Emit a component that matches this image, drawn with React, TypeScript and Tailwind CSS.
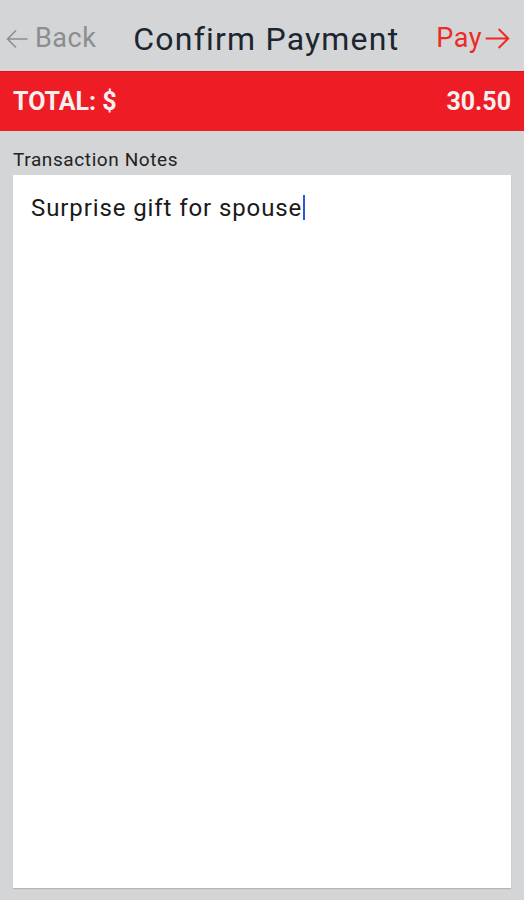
const notes = 'Surprise gift for spouse';

function ArrowLeft({ className }: { className?: string }) {
  return (
    <svg viewBox="0 0 24 24" className={className} fill="none" stroke="currentColor" strokeWidth={1.6}>
      <path d="M22.5 12H2.5M11 3.5 2.5 12l8.5 8.5" />
    </svg>
  );
}

function ArrowRight({ className }: { className?: string }) {
  return (
    <svg viewBox="0 0 24 24" className={className} fill="none" stroke="currentColor" strokeWidth={1.8}>
      <path d="M1.5 12h20M13 3.5l8.5 8.5-8.5 8.5" />
    </svg>
  );
}

export default function App() {
  return (
    <div className="flex h-[900px] w-[524px] flex-col bg-[#d3d5d6] font-['Roboto',sans-serif]">
      <header className="flex h-[71px] items-center px-[5px] pt-[6px]">
        <button className="flex items-center gap-[6px] text-[27px] tracking-[0.5px] text-[#8c8d8e]">
          <ArrowLeft className="h-[24px] w-[24px]" />
          <span>Back</span>
        </button>
        <h1 className="ml-[37px] text-[32px] tracking-[1.2px] text-[#1c2530]">Confirm Payment</h1>
        <button className="ml-auto flex items-center gap-[2px] pr-[8px] text-[27px] tracking-[0.5px] text-[#ee2a26]">
          <span>Pay</span>
          <ArrowRight className="h-[27px] w-[27px]" />
        </button>
      </header>

      <div className="flex h-[60px] items-center justify-between border-t border-[#d8141c] bg-[#ee1c25] px-[13px] text-[25px] font-bold text-[#f4f0f0]">
        <span>TOTAL: $</span>
        <span>30.50</span>
      </div>

      <div className="flex flex-1 flex-col px-[13px] pb-[12px]">
        <label className="pt-[17px] pb-[3px] text-[19px] leading-[24px] tracking-[0.6px] text-[#222]">
          Transaction Notes
        </label>
        <div className="flex-1 bg-white px-[18px] pt-[16px] shadow-[0_1px_1px_rgba(0,0,0,0.15)]">
          <p className="text-[24px] leading-[32px] tracking-[0.9px] text-[#1a1a1a]">
            {notes}
            <span className="ml-[1px] inline-block h-[25px] w-[2px] translate-y-[4px] bg-[#2a55e5]" />
          </p>
        </div>
      </div>
    </div>
  );
}
